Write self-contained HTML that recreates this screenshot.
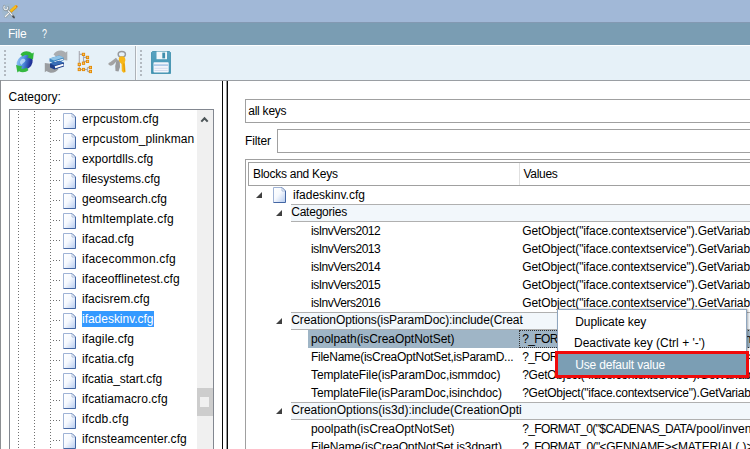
<!DOCTYPE html>
<html><head><meta charset="utf-8"><title>Config editor</title>
<style>
*{box-sizing:border-box;margin:0;padding:0}
html,body{width:750px;height:449px;overflow:hidden;background:#fff}
body{position:relative;font-family:"Liberation Sans",sans-serif;font-size:12px;color:#000;line-height:1}
.abs{position:absolute}
.t{position:absolute;white-space:nowrap;line-height:16px;height:16px}
.c{position:absolute;overflow:hidden;height:16px}
.fi{position:absolute}
#title{left:0;top:0;width:750px;height:22px;background:#a1b8d7}
#menu{left:0;top:22px;width:750px;height:23px;background:#7a9db3;border-top:1px solid #8399b2}
#tool{left:0;top:45px;width:750px;height:36px;background:#e6f1f8;border-top:1px solid #fdfeff;border-bottom:1px solid #9a9ea3}
.grip{position:absolute;width:2px;top:50px;height:26px;background-image:linear-gradient(#b3bac1 1.7px,transparent 1.7px);background-size:2px 4px}
.vd{position:absolute;width:1px;background-image:linear-gradient(#707070 1.2px,transparent 1.2px);background-size:1px 3px}
.hd{position:absolute;height:1px;background-image:linear-gradient(90deg,#707070 1.2px,transparent 1.2px);background-size:3px 1px}
.row{position:absolute;left:291px;width:470px;height:18px;background:#f2f7fb;border-top:1px solid #b0b0b0;border-bottom:1px solid #b0b0b0}
.tri{position:absolute;width:0;height:0;border-left:6px solid transparent;border-bottom:6px solid #404040}
</style></head><body>
<svg width="0" height="0" style="position:absolute"><defs><linearGradient id="fg" x1="0" y1="0" x2="1" y2="1"><stop offset="0" stop-color="#ffffff"/><stop offset="0.45" stop-color="#f6f9fe"/><stop offset="1" stop-color="#b4caef"/></linearGradient></defs></svg>
<div id="title" class="abs"></div>
<svg class="abs" style="left:0;top:0" width="24" height="22" viewBox="0 0 24 22">
<circle cx="9.8" cy="11.2" r="7.8" fill="#9db8c4" opacity="0.4"/>
<path d="M10.3 11.9L5.5 16.7" stroke="#8d989f" stroke-width="2.2" stroke-linecap="round"/>
<path d="M10.3 11.7L5.4 16.5" stroke="#f1f3f4" stroke-width="1.2" stroke-linecap="round"/>
<path d="M11 11.1L16 6.6" stroke="#d89a10" stroke-width="3.2" stroke-linecap="round"/>
<path d="M11 10.8L15.9 6.4" stroke="#f8bd1c" stroke-width="2.2" stroke-linecap="round"/>
<path d="M16.3 6L16.9 7" stroke="#e8642a" stroke-width="1"/>
<path d="M7.2 9.6L13.4 16.6" stroke="#7f8a92" stroke-width="2.2" stroke-linecap="round"/>
<path d="M7 9.4L13 16.2" stroke="#f6f7f8" stroke-width="1.2" stroke-linecap="round"/>
<path d="M12.9 16.2L14 17.5" stroke="#4a4f54" stroke-width="1.8" stroke-linecap="round"/>
<path d="M4.3 5.9C3 7.5 3.6 9.6 5.6 10.1C7.3 10.3 8.4 9 8 7.3" fill="none" stroke="#8a959c" stroke-width="2.2" stroke-linecap="round"/>
<path d="M4.4 6.1C3.3 7.5 3.8 9.3 5.6 9.7C7 9.9 7.9 8.8 7.6 7.4" fill="none" stroke="#e9edf0" stroke-width="1.1" stroke-linecap="round"/>
</svg>
<div id="menu" class="abs"></div>
<div id="tool" class="abs"></div>
<div class="grip" style="left:4px"></div>
<div class="grip" style="left:140px"></div>
<div class="abs" style="left:135px;top:46px;width:1px;height:34px;background:#adb3b9"></div><div class="abs" style="left:136px;top:46px;width:1px;height:34px;background:#f6fafc"></div>

<div class="t" style="left:8.0px;top:26.0px;color:#fff;letter-spacing:-0.211px;">File</div>
<div class="t" style="left:42.2px;top:26px;color:#fff;transform:scaleX(0.74);transform-origin:0 0">?</div>

<svg class="abs" style="left:0;top:45px" width="200" height="35" viewBox="0 45 200 35">
<defs>
<linearGradient id="gl" x1="0" y1="0" x2="1" y2="1"><stop offset="0" stop-color="#a8d4f8"/><stop offset="0.45" stop-color="#4f8fe0"/><stop offset="0.75" stop-color="#2338a0"/><stop offset="1" stop-color="#1a237a"/></linearGradient>
<linearGradient id="sv" x1="0" y1="0" x2="0" y2="1"><stop offset="0" stop-color="#5aa3c0"/><stop offset="1" stop-color="#3f93b3"/></linearGradient>
</defs>
<!-- globe refresh -->
<ellipse cx="24.6" cy="62.5" rx="8.6" ry="7" transform="rotate(-38 24.6 62.5)" fill="url(#gl)"/>
<path d="M20.5 60.5C22 58 25 58.5 25.5 60.5C25 62.5 22.5 63 21.5 65C20 64 19.5 62 20.5 60.5Z" fill="#cfe6fb" opacity="0.75"/>
<path d="M20.5 54.5C23 50.5 29 50.5 32 53.5L33.8 52.6L33 59.4L27 57.2L29 56C27 54.5 24 54.8 22.6 56.6Z" fill="#2fb73a"/>
<path d="M28.5 70C26 72.6 21.5 72.8 19 71.2L17.4 72.4L16 65L22.5 66.6L21 68.2C22.5 69.2 25 69 26.5 67.6Z" fill="#36b840"/>
<!-- books with arrows -->
<path d="M53.5 54.5C56 50 62 49.5 65.5 52.5L67.3 51.2V60.5L59.5 59.5L62 57C60.5 55.5 58 55.5 56.5 57Z" fill="#a9acaf"/>
<path d="M58.5 69C56 73 50.5 74 46.6 71L44.8 72.2V63L52.5 64L50.2 66.3C51.8 67.8 54 67.6 55.5 66.3Z" fill="#9a9da0"/>
<path d="M49.5 58.5L59 55.5L63.5 57.5V60.5L54 63.5L49.5 61.5Z" fill="#3d86c2"/>
<path d="M49.5 58.5L59 55.5L63.5 57.5L54 60.5Z" fill="#8fc3e6"/>
<path d="M54.5 62L63 59.3" stroke="#f4f8fc" stroke-width="1.3"/>
<path d="M50 63.5L59.5 60.8L64 62.8V66.5L54.5 69.5L50 67.5Z" fill="#1f3f8a"/>
<path d="M55 67.3L63.5 64.6" stroke="#ffffff" stroke-width="2"/>
<path d="M50 63.5L59.5 60.8L64 62.8L54.5 65.5Z" fill="#3a70b8"/>
<!-- tree -->
<g stroke="#a9a9b0" stroke-width="1.1" fill="none"><path d="M79.3 51V69.5M79.3 54.4H83.5M83.5 55V63M83.5 57.4H87.5M83.5 61.4H87.5M79.3 69.5H83.5M83.5 69.5H87.4M87.4 67.5V71.5M87.4 67.5H90.4M87.4 71.5H90.4"/></g>
<g fill="#ffc35c" stroke="#e38800" stroke-width="0.9">
<rect x="82.35" y="53.25" width="2.3" height="2.3"/><rect x="86.35" y="56.25" width="2.3" height="2.3"/><rect x="86.35" y="60.25" width="2.3" height="2.3"/>
<rect x="82.35" y="62.05" width="2.3" height="2.3"/><rect x="78.15" y="63.25" width="2.3" height="2.3"/><rect x="78.15" y="68.35" width="2.3" height="2.3"/>
<rect x="82.35" y="68.35" width="2.3" height="2.3"/><rect x="89.25" y="66.35" width="2.3" height="2.3"/><rect x="89.25" y="70.35" width="2.3" height="2.3"/>
</g>
<!-- keys -->
<ellipse cx="121.8" cy="54.2" rx="3.6" ry="2.8" fill="none" stroke="#97999c" stroke-width="1.5"/>
<path d="M108.5 64.5C108 63 109 62.5 110.5 62L116 57.8L117.8 60L113.5 64.5C112 66 109.5 66 108.5 64.5Z" fill="#a3a3a3"/>
<path d="M116.5 60L119.8 60.5L120 67L118.5 71.5L115.5 71L115.2 66Z" fill="#999b9d"/>
<path d="M118.8 58.5C119 56.5 122 55.5 124 56.8C125.5 58 125.8 60.5 124.8 62L125.6 72L123.5 72.8L121.8 71L121.6 64C120 63 118.6 61 118.8 58.5Z" fill="#f7b718"/>
<path d="M123.8 63.5L124.5 71.5" stroke="#d98f00" stroke-width="0.8"/>
<!-- save -->
<path d="M152.5 51.5H169.5L170.5 52.5V73.5H151.5V52.5Z" fill="url(#sv)" stroke="#3a8dab" stroke-width="0.8"/>
<rect x="156.5" y="51.6" width="10.5" height="7.6" fill="#f3f8fb"/>
<rect x="162.3" y="52.6" width="2.8" height="5.8" fill="#3f8fad"/>
<rect x="153.5" y="62.3" width="15.2" height="10.2" rx="0.8" fill="#f2f5fb"/>
<rect x="154" y="64.3" width="14.2" height="1.6" fill="#a9c6e6"/>
<rect x="154.5" y="67.8" width="13.2" height="1" fill="#d4dcee"/>
<rect x="154.5" y="70" width="13.2" height="1" fill="#d4dcee"/>
</svg>


<div class="abs" style="left:0;top:80px;width:1px;height:369px;background:#8c8f93"></div>
<div class="abs" style="left:222px;top:81px;width:1px;height:368px;background:#0a0a0a"></div>
<div class="abs" style="left:226px;top:81px;width:1px;height:368px;background:#9a9a9a"></div>
<div class="abs" style="left:227px;top:81px;width:1px;height:368px;background:#080808"></div>
<div class="abs" style="left:9px;top:109px;width:205px;height:345px;border:1px solid #828790;background:#fff"></div>
<div class="abs" style="left:197px;top:110px;width:16px;height:339px;background:#f0f0f0"></div>
<svg class="abs" style="left:199px;top:115px" width="11" height="8" viewBox="0 0 11 8"><path d="M2.3 6.6L5.5 3.2L8.7 6.6" fill="none" stroke="#4d5558" stroke-width="2.1"/></svg>
<div class="abs" style="left:197px;top:388px;width:16px;height:28px;background:#cdcdcd"></div>
<div class="abs" style="left:200px;top:397px;width:9px;height:10px;background:#f0f0f0"></div>
<div class="vd" style="left:18px;top:111px;height:339px"></div>
<div class="vd" style="left:34px;top:111px;height:339px"></div>
<div class="vd" style="left:50px;top:111px;height:339px"></div>

<div class="t" style="left:8.6px;top:89.0px;letter-spacing:0.019px;">Category:</div>
<div class="hd" style="left:53px;top:120px;width:9px"></div>
<svg class="fi" style="left:63px;top:113px" width="13" height="16" viewBox="0 0 13 16"><path d="M0.5 0.5H9L12.5 4V15.5H0.5Z" fill="url(#fg)"/><path d="M0.5 15.5V0.5H9" fill="none" stroke="#9fb3d6"/><path d="M9 0.5L12.5 4V15.5H0.5" fill="none" stroke="#4366a3"/><path d="M9 0.8V4H12.2Z" fill="#ffffff" stroke="#8fa6cf" stroke-width="0.7"/></svg>
<div class="t" style="left:82.0px;top:111.0px;letter-spacing:0.110px;">erpcustom.cfg</div>
<div class="hd" style="left:53px;top:140px;width:9px"></div>
<svg class="fi" style="left:63px;top:133px" width="13" height="16" viewBox="0 0 13 16"><path d="M0.5 0.5H9L12.5 4V15.5H0.5Z" fill="url(#fg)"/><path d="M0.5 15.5V0.5H9" fill="none" stroke="#9fb3d6"/><path d="M9 0.5L12.5 4V15.5H0.5" fill="none" stroke="#4366a3"/><path d="M9 0.8V4H12.2Z" fill="#ffffff" stroke="#8fa6cf" stroke-width="0.7"/></svg>
<div class="c" style="left:82.0px;top:131.0px;width:113px"><div class="t" style="left:0;top:0;letter-spacing:0.088px;">erpcustom_plinkman</div></div>
<div class="hd" style="left:53px;top:160px;width:9px"></div>
<svg class="fi" style="left:63px;top:153px" width="13" height="16" viewBox="0 0 13 16"><path d="M0.5 0.5H9L12.5 4V15.5H0.5Z" fill="url(#fg)"/><path d="M0.5 15.5V0.5H9" fill="none" stroke="#9fb3d6"/><path d="M9 0.5L12.5 4V15.5H0.5" fill="none" stroke="#4366a3"/><path d="M9 0.8V4H12.2Z" fill="#ffffff" stroke="#8fa6cf" stroke-width="0.7"/></svg>
<div class="t" style="left:82.0px;top:151.0px;letter-spacing:0.043px;">exportdlls.cfg</div>
<div class="hd" style="left:53px;top:180px;width:9px"></div>
<svg class="fi" style="left:63px;top:173px" width="13" height="16" viewBox="0 0 13 16"><path d="M0.5 0.5H9L12.5 4V15.5H0.5Z" fill="url(#fg)"/><path d="M0.5 15.5V0.5H9" fill="none" stroke="#9fb3d6"/><path d="M9 0.5L12.5 4V15.5H0.5" fill="none" stroke="#4366a3"/><path d="M9 0.8V4H12.2Z" fill="#ffffff" stroke="#8fa6cf" stroke-width="0.7"/></svg>
<div class="t" style="left:82.0px;top:171.0px;letter-spacing:-0.032px;">filesystems.cfg</div>
<div class="hd" style="left:53px;top:200px;width:9px"></div>
<svg class="fi" style="left:63px;top:193px" width="13" height="16" viewBox="0 0 13 16"><path d="M0.5 0.5H9L12.5 4V15.5H0.5Z" fill="url(#fg)"/><path d="M0.5 15.5V0.5H9" fill="none" stroke="#9fb3d6"/><path d="M9 0.5L12.5 4V15.5H0.5" fill="none" stroke="#4366a3"/><path d="M9 0.8V4H12.2Z" fill="#ffffff" stroke="#8fa6cf" stroke-width="0.7"/></svg>
<div class="t" style="left:82.0px;top:191.0px;letter-spacing:-0.028px;">geomsearch.cfg</div>
<div class="hd" style="left:53px;top:220px;width:9px"></div>
<svg class="fi" style="left:63px;top:213px" width="13" height="16" viewBox="0 0 13 16"><path d="M0.5 0.5H9L12.5 4V15.5H0.5Z" fill="url(#fg)"/><path d="M0.5 15.5V0.5H9" fill="none" stroke="#9fb3d6"/><path d="M9 0.5L12.5 4V15.5H0.5" fill="none" stroke="#4366a3"/><path d="M9 0.8V4H12.2Z" fill="#ffffff" stroke="#8fa6cf" stroke-width="0.7"/></svg>
<div class="t" style="left:82.0px;top:211.0px;letter-spacing:0.241px;">htmltemplate.cfg</div>
<div class="hd" style="left:53px;top:240px;width:9px"></div>
<svg class="fi" style="left:63px;top:233px" width="13" height="16" viewBox="0 0 13 16"><path d="M0.5 0.5H9L12.5 4V15.5H0.5Z" fill="url(#fg)"/><path d="M0.5 15.5V0.5H9" fill="none" stroke="#9fb3d6"/><path d="M9 0.5L12.5 4V15.5H0.5" fill="none" stroke="#4366a3"/><path d="M9 0.8V4H12.2Z" fill="#ffffff" stroke="#8fa6cf" stroke-width="0.7"/></svg>
<div class="t" style="left:82.0px;top:231.0px;letter-spacing:0.072px;">ifacad.cfg</div>
<div class="hd" style="left:53px;top:260px;width:9px"></div>
<svg class="fi" style="left:63px;top:253px" width="13" height="16" viewBox="0 0 13 16"><path d="M0.5 0.5H9L12.5 4V15.5H0.5Z" fill="url(#fg)"/><path d="M0.5 15.5V0.5H9" fill="none" stroke="#9fb3d6"/><path d="M9 0.5L12.5 4V15.5H0.5" fill="none" stroke="#4366a3"/><path d="M9 0.8V4H12.2Z" fill="#ffffff" stroke="#8fa6cf" stroke-width="0.7"/></svg>
<div class="t" style="left:82.0px;top:251.0px;letter-spacing:0.220px;">ifacecommon.cfg</div>
<div class="hd" style="left:53px;top:280px;width:9px"></div>
<svg class="fi" style="left:63px;top:273px" width="13" height="16" viewBox="0 0 13 16"><path d="M0.5 0.5H9L12.5 4V15.5H0.5Z" fill="url(#fg)"/><path d="M0.5 15.5V0.5H9" fill="none" stroke="#9fb3d6"/><path d="M9 0.5L12.5 4V15.5H0.5" fill="none" stroke="#4366a3"/><path d="M9 0.8V4H12.2Z" fill="#ffffff" stroke="#8fa6cf" stroke-width="0.7"/></svg>
<div class="t" style="left:82.0px;top:271.0px;letter-spacing:0.093px;">ifaceofflinetest.cfg</div>
<div class="hd" style="left:53px;top:300px;width:9px"></div>
<svg class="fi" style="left:63px;top:293px" width="13" height="16" viewBox="0 0 13 16"><path d="M0.5 0.5H9L12.5 4V15.5H0.5Z" fill="url(#fg)"/><path d="M0.5 15.5V0.5H9" fill="none" stroke="#9fb3d6"/><path d="M9 0.5L12.5 4V15.5H0.5" fill="none" stroke="#4366a3"/><path d="M9 0.8V4H12.2Z" fill="#ffffff" stroke="#8fa6cf" stroke-width="0.7"/></svg>
<div class="t" style="left:82.0px;top:291.0px;letter-spacing:0.019px;">ifacisrem.cfg</div>
<div class="hd" style="left:53px;top:320px;width:9px"></div>
<svg class="fi" style="left:63px;top:313px" width="13" height="16" viewBox="0 0 13 16"><path d="M0.5 0.5H9L12.5 4V15.5H0.5Z" fill="url(#fg)"/><path d="M0.5 15.5V0.5H9" fill="none" stroke="#9fb3d6"/><path d="M9 0.5L12.5 4V15.5H0.5" fill="none" stroke="#4366a3"/><path d="M9 0.8V4H12.2Z" fill="#ffffff" stroke="#8fa6cf" stroke-width="0.7"/></svg>
<div class="abs" style="left:82px;top:311px;width:72px;height:16px;background:#3399ff"></div>
<div class="t" style="left:82.0px;top:311.0px;color:#fff;letter-spacing:-0.022px;">ifadeskinv.cfg</div>
<div class="hd" style="left:53px;top:340px;width:9px"></div>
<svg class="fi" style="left:63px;top:333px" width="13" height="16" viewBox="0 0 13 16"><path d="M0.5 0.5H9L12.5 4V15.5H0.5Z" fill="url(#fg)"/><path d="M0.5 15.5V0.5H9" fill="none" stroke="#9fb3d6"/><path d="M9 0.5L12.5 4V15.5H0.5" fill="none" stroke="#4366a3"/><path d="M9 0.8V4H12.2Z" fill="#ffffff" stroke="#8fa6cf" stroke-width="0.7"/></svg>
<div class="t" style="left:82.0px;top:331.0px;letter-spacing:0.127px;">ifagile.cfg</div>
<div class="hd" style="left:53px;top:360px;width:9px"></div>
<svg class="fi" style="left:63px;top:353px" width="13" height="16" viewBox="0 0 13 16"><path d="M0.5 0.5H9L12.5 4V15.5H0.5Z" fill="url(#fg)"/><path d="M0.5 15.5V0.5H9" fill="none" stroke="#9fb3d6"/><path d="M9 0.5L12.5 4V15.5H0.5" fill="none" stroke="#4366a3"/><path d="M9 0.8V4H12.2Z" fill="#ffffff" stroke="#8fa6cf" stroke-width="0.7"/></svg>
<div class="t" style="left:82.0px;top:351.0px;letter-spacing:0.127px;">ifcatia.cfg</div>
<div class="hd" style="left:53px;top:380px;width:9px"></div>
<svg class="fi" style="left:63px;top:373px" width="13" height="16" viewBox="0 0 13 16"><path d="M0.5 0.5H9L12.5 4V15.5H0.5Z" fill="url(#fg)"/><path d="M0.5 15.5V0.5H9" fill="none" stroke="#9fb3d6"/><path d="M9 0.5L12.5 4V15.5H0.5" fill="none" stroke="#4366a3"/><path d="M9 0.8V4H12.2Z" fill="#ffffff" stroke="#8fa6cf" stroke-width="0.7"/></svg>
<div class="t" style="left:82.0px;top:371.0px;letter-spacing:-0.030px;">ifcatia_start.cfg</div>
<div class="hd" style="left:53px;top:400px;width:9px"></div>
<svg class="fi" style="left:63px;top:393px" width="13" height="16" viewBox="0 0 13 16"><path d="M0.5 0.5H9L12.5 4V15.5H0.5Z" fill="url(#fg)"/><path d="M0.5 15.5V0.5H9" fill="none" stroke="#9fb3d6"/><path d="M9 0.5L12.5 4V15.5H0.5" fill="none" stroke="#4366a3"/><path d="M9 0.8V4H12.2Z" fill="#ffffff" stroke="#8fa6cf" stroke-width="0.7"/></svg>
<div class="t" style="left:82.0px;top:391.0px;letter-spacing:0.104px;">ifcatiamacro.cfg</div>
<div class="hd" style="left:53px;top:420px;width:9px"></div>
<svg class="fi" style="left:63px;top:413px" width="13" height="16" viewBox="0 0 13 16"><path d="M0.5 0.5H9L12.5 4V15.5H0.5Z" fill="url(#fg)"/><path d="M0.5 15.5V0.5H9" fill="none" stroke="#9fb3d6"/><path d="M9 0.5L12.5 4V15.5H0.5" fill="none" stroke="#4366a3"/><path d="M9 0.8V4H12.2Z" fill="#ffffff" stroke="#8fa6cf" stroke-width="0.7"/></svg>
<div class="t" style="left:82.0px;top:411.0px;letter-spacing:0.233px;">ifcdb.cfg</div>
<div class="hd" style="left:53px;top:440px;width:9px"></div>
<svg class="fi" style="left:63px;top:433px" width="13" height="16" viewBox="0 0 13 16"><path d="M0.5 0.5H9L12.5 4V15.5H0.5Z" fill="url(#fg)"/><path d="M0.5 15.5V0.5H9" fill="none" stroke="#9fb3d6"/><path d="M9 0.5L12.5 4V15.5H0.5" fill="none" stroke="#4366a3"/><path d="M9 0.8V4H12.2Z" fill="#ffffff" stroke="#8fa6cf" stroke-width="0.7"/></svg>
<div class="t" style="left:82.0px;top:431.0px;letter-spacing:0.074px;">ifcnsteamcenter.cfg</div>

<div class="abs" style="left:245px;top:99px;width:520px;height:24px;border:1px solid #a0a0a0;background:#fff"></div>
<div class="abs" style="left:277px;top:129px;width:490px;height:24px;border:1px solid #a0a0a0;background:#fff"></div>
<div class="abs" style="left:245px;top:159px;width:520px;height:300px;border:1px solid #a0a0a0;background:#fff"></div>
<div class="abs" style="left:248px;top:162px;width:520px;height:24px;border:1px solid #a0a0a0;background:#fff"></div>
<div class="abs" style="left:519px;top:163px;width:1px;height:22px;background:#e0e0e0"></div>

<div class="t" style="left:248.2px;top:103.0px;letter-spacing:-0.227px;">all keys</div>
<div class="t" style="left:244.9px;top:133.0px;letter-spacing:-0.095px;">Filter</div>
<div class="t" style="left:252.9px;top:166.0px;letter-spacing:-0.261px;">Blocks and Keys</div>
<div class="t" style="left:523.6px;top:166.0px;letter-spacing:-0.335px;">Values</div>
<div class="tri" style="left:256px;top:192px"></div>
<svg class="fi" style="left:273px;top:187px" width="13" height="16" viewBox="0 0 13 16"><path d="M0.5 0.5H9L12.5 4V15.5H0.5Z" fill="url(#fg)"/><path d="M0.5 15.5V0.5H9" fill="none" stroke="#9fb3d6"/><path d="M9 0.5L12.5 4V15.5H0.5" fill="none" stroke="#4366a3"/><path d="M9 0.8V4H12.2Z" fill="#ffffff" stroke="#8fa6cf" stroke-width="0.7"/></svg>
<div class="t" style="left:293.1px;top:187.0px;">ifadeskinv.cfg</div>
<div class="row" style="top:204px"></div>
<div class="tri" style="left:276px;top:210px"></div>
<div class="t" style="left:291.2px;top:204.0px;letter-spacing:-0.223px;">Categories</div>
<div class="t" style="left:311.0px;top:223.0px;letter-spacing:-0.469px;">isInvVers2012</div>
<div class="t" style="left:522.2px;top:223.0px;letter-spacing:-0.107px;">GetObject("iface.contextservice").GetVariable</div>
<div class="t" style="left:311.0px;top:241.0px;letter-spacing:-0.469px;">isInvVers2013</div>
<div class="t" style="left:522.2px;top:241.0px;letter-spacing:-0.107px;">GetObject("iface.contextservice").GetVariable</div>
<div class="t" style="left:311.0px;top:259.0px;letter-spacing:-0.469px;">isInvVers2014</div>
<div class="t" style="left:522.2px;top:259.0px;letter-spacing:-0.107px;">GetObject("iface.contextservice").GetVariable</div>
<div class="t" style="left:311.0px;top:277.0px;letter-spacing:-0.469px;">isInvVers2015</div>
<div class="t" style="left:522.2px;top:277.0px;letter-spacing:-0.107px;">GetObject("iface.contextservice").GetVariable</div>
<div class="t" style="left:311.0px;top:295.0px;letter-spacing:-0.469px;">isInvVers2016</div>
<div class="t" style="left:522.2px;top:295.0px;letter-spacing:-0.107px;">GetObject("iface.contextservice").GetVariable</div>
<div class="row" style="top:312px"></div>
<div class="tri" style="left:276px;top:318px"></div>
<div class="t" style="left:291.2px;top:312.0px;letter-spacing:-0.080px;">CreationOptions(isParamDoc):include(Creat</div>
<div class="abs" style="left:308px;top:330px;width:450px;height:18px;background:#9fb5c6"></div>
<div class="abs" style="left:519px;top:330px;width:240px;height:18px;border:1px dotted #333"></div>
<div class="t" style="left:311.0px;top:331.0px;letter-spacing:-0.050px;">poolpath(isCreaOptNotSet)</div>
<div class="t" style="left:522.2px;top:331.0px;"><span style="letter-spacing:-0.629px">?_FORMAT_0("$CADENAS_DATA</span><span style="letter-spacing:0.062px">/pool/inve</span><span style="letter-spacing:0.062px">ntor</span></div>
<div class="t" style="left:311.0px;top:349.0px;letter-spacing:-0.271px;">FileName(isCreaOptNotSet,isParamD...</div>
<div class="t" style="left:522.2px;top:349.0px;"><span style="letter-spacing:-0.611px">?_FORMAT_0("</span><span style="letter-spacing:-0.345px">&lt;GENNAME&gt;</span><span style="letter-spacing:-0.238px">&lt;MATERIAL</span><span style="letter-spacing:-0.043px">( )</span><span style="letter-spacing:-0.043px">&gt;</span></div>
<div class="t" style="left:311.0px;top:367.0px;letter-spacing:-0.107px;">TemplateFile(isParamDoc,ismmdoc)</div>
<div class="t" style="left:522.2px;top:367.0px;letter-spacing:-0.242px;">?GetObject("iface.contextservice").GetVariable</div>
<div class="t" style="left:311.0px;top:385.0px;letter-spacing:-0.116px;">TemplateFile(isParamDoc,isinchdoc)</div>
<div class="t" style="left:522.2px;top:385.0px;letter-spacing:-0.242px;">?GetObject("iface.contextservice").GetVariable</div>
<div class="row" style="top:402px"></div>
<div class="tri" style="left:276px;top:408px"></div>
<div class="t" style="left:291.2px;top:402.0px;letter-spacing:0.025px;">CreationOptions(is3d):include(CreationOpti</div>
<div class="t" style="left:311.0px;top:421.0px;letter-spacing:-0.050px;">poolpath(isCreaOptNotSet)</div>
<div class="t" style="left:522.2px;top:421.0px;"><span style="letter-spacing:-0.629px">?_FORMAT_0("$CADENAS_DATA</span><span style="letter-spacing:0.062px">/pool/inve</span><span style="letter-spacing:0.062px">ntor</span></div>
<div class="t" style="left:311.0px;top:439.0px;letter-spacing:-0.155px;">FileName(isCreaOptNotSet,is3dpart)</div>
<div class="t" style="left:522.2px;top:439.0px;"><span style="letter-spacing:-0.611px">?_FORMAT_0("</span><span style="letter-spacing:-0.345px">&lt;GENNAME&gt;</span><span style="letter-spacing:-0.238px">&lt;MATERIAL</span><span style="letter-spacing:-0.043px">( )</span><span style="letter-spacing:-0.043px">&gt;</span></div>

<div class="abs" style="left:557px;top:309px;width:190px;height:68px;background:#fff;border:1px solid #8fa6bf;box-shadow:1px 0 2px rgba(0,0,0,0.3)"></div>
<div class="abs" style="left:555px;top:351px;width:194px;height:27px;background:#7b9eb4;border:3px solid #f00a0a"></div>

<div class="t" style="left:575.2px;top:314.0px;letter-spacing:-0.073px;">Duplicate key</div>
<div class="t" style="left:574.0px;top:335.0px;letter-spacing:0.005px;">Deactivate key (Ctrl + '-')</div>
<div class="t" style="left:575.2px;top:357.0px;color:#fff;letter-spacing:-0.173px;">Use default value</div>
</body></html>
